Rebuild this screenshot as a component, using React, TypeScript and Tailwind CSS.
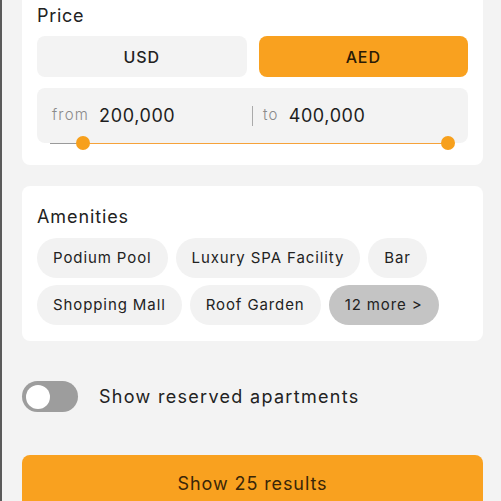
import React from 'react';

const font = { fontFamily: 'Inter, "Noto Sans", sans-serif' };

const amenities = ['Podium Pool', 'Luxury SPA Facility', 'Bar', 'Shopping Mall', 'Roof Garden'];

const Chip: React.FC<{ label: string; dark?: boolean }> = ({ label, dark }) => (
  <span
    className={`h-[40px] px-[16px] rounded-full flex items-center text-[15px] tracking-[0.9px] text-[#222] ${
      dark ? 'bg-[#c4c4c4]' : 'bg-[#f2f2f2]'
    }`}
  >
    {label}
  </span>
);

export default function App() {
  return (
    <div
      className="w-[501px] h-[501px] overflow-hidden bg-[#f3f3f3] border-l-2 border-[#5a5a5a] pl-[20px] pr-[18px] flex flex-col"
      style={font}
    >
      {/* Price */}
      <div className="bg-white rounded-b-lg px-[15px] pt-[4px] pb-[22px]">
        <div className="text-[18px] leading-[24px] text-[#222] tracking-[0.7px]">Price</div>
        <div className="mt-[8px] grid grid-cols-2 gap-[12px]">
          <button className="h-[41px] rounded-lg bg-[#f3f3f3] text-[16px] font-medium text-[#222] tracking-[0.9px]">
            USD
          </button>
          <button className="h-[41px] rounded-lg bg-[#f9a11f] text-[16px] font-medium text-[#2a1a05] tracking-[0.9px]">
            AED
          </button>
        </div>
        <div className="relative mt-[11px] h-[55px] rounded-lg bg-[#f3f3f3] flex items-center px-[15px]">
          <div className="flex-1 flex items-center gap-[10px]">
            <span className="text-[15px] text-[#8a8a8a] font-light tracking-[1.2px]">from</span>
            <span className="text-[18px] text-[#1e1e1e] tracking-[0.6px]">200,000</span>
          </div>
          <div className="w-px h-[20px] bg-[#aaa] ml-[10px] mr-[10px]" />
          <div className="flex-1 flex items-center gap-[10px]">
            <span className="text-[15px] text-[#8a8a8a] font-light tracking-[1.2px]">to</span>
            <span className="text-[18px] text-[#1e1e1e] tracking-[0.6px]">400,000</span>
          </div>
          <div className="absolute left-[13px] right-[20px] bottom-0 h-[14px] translate-y-1/2 flex items-center">
            <div className="w-[33px] h-px bg-[#9a9a9a]" />
            <div className="flex-1 h-px bg-[#f6a23a]" />
            <div className="absolute left-[26px] w-[14px] h-[14px] rounded-full bg-[#f7a01c]" />
            <div className="absolute right-[-7px] w-[14px] h-[14px] rounded-full bg-[#f7a01c]" />
          </div>
        </div>
      </div>

      {/* Amenities */}
      <div className="mt-[21px] bg-white rounded-lg px-[15px] pt-[19px] pb-[16px]">
        <div className="text-[18px] leading-[24px] text-[#222] tracking-[0.9px]">Amenities</div>
        <div className="mt-[9px] flex flex-wrap gap-x-[8px] gap-y-[7px] w-[420px]">
          {amenities.map((a) => (
            <Chip key={a} label={a} />
          ))}
          <Chip label="12 more >" dark />
        </div>
      </div>

      {/* Toggle */}
      <div className="mt-[40px] flex items-center gap-[21px]">
        <div className="w-[56px] h-[31px] rounded-full bg-[#9d9d9d] flex items-center pl-[4px]">
          <div className="w-[24px] h-[24px] rounded-full bg-white" />
        </div>
        <span className="text-[18px] text-[#222] tracking-[1.3px]">Show reserved apartments</span>
      </div>

      <button className="mt-[43px] h-[60px] shrink-0 rounded-t-lg bg-[#f9a11f] text-[18px] text-[#3a2608] tracking-[0.9px] flex justify-center pt-[15px]">
        Show 25 results
      </button>
    </div>
  );
}
